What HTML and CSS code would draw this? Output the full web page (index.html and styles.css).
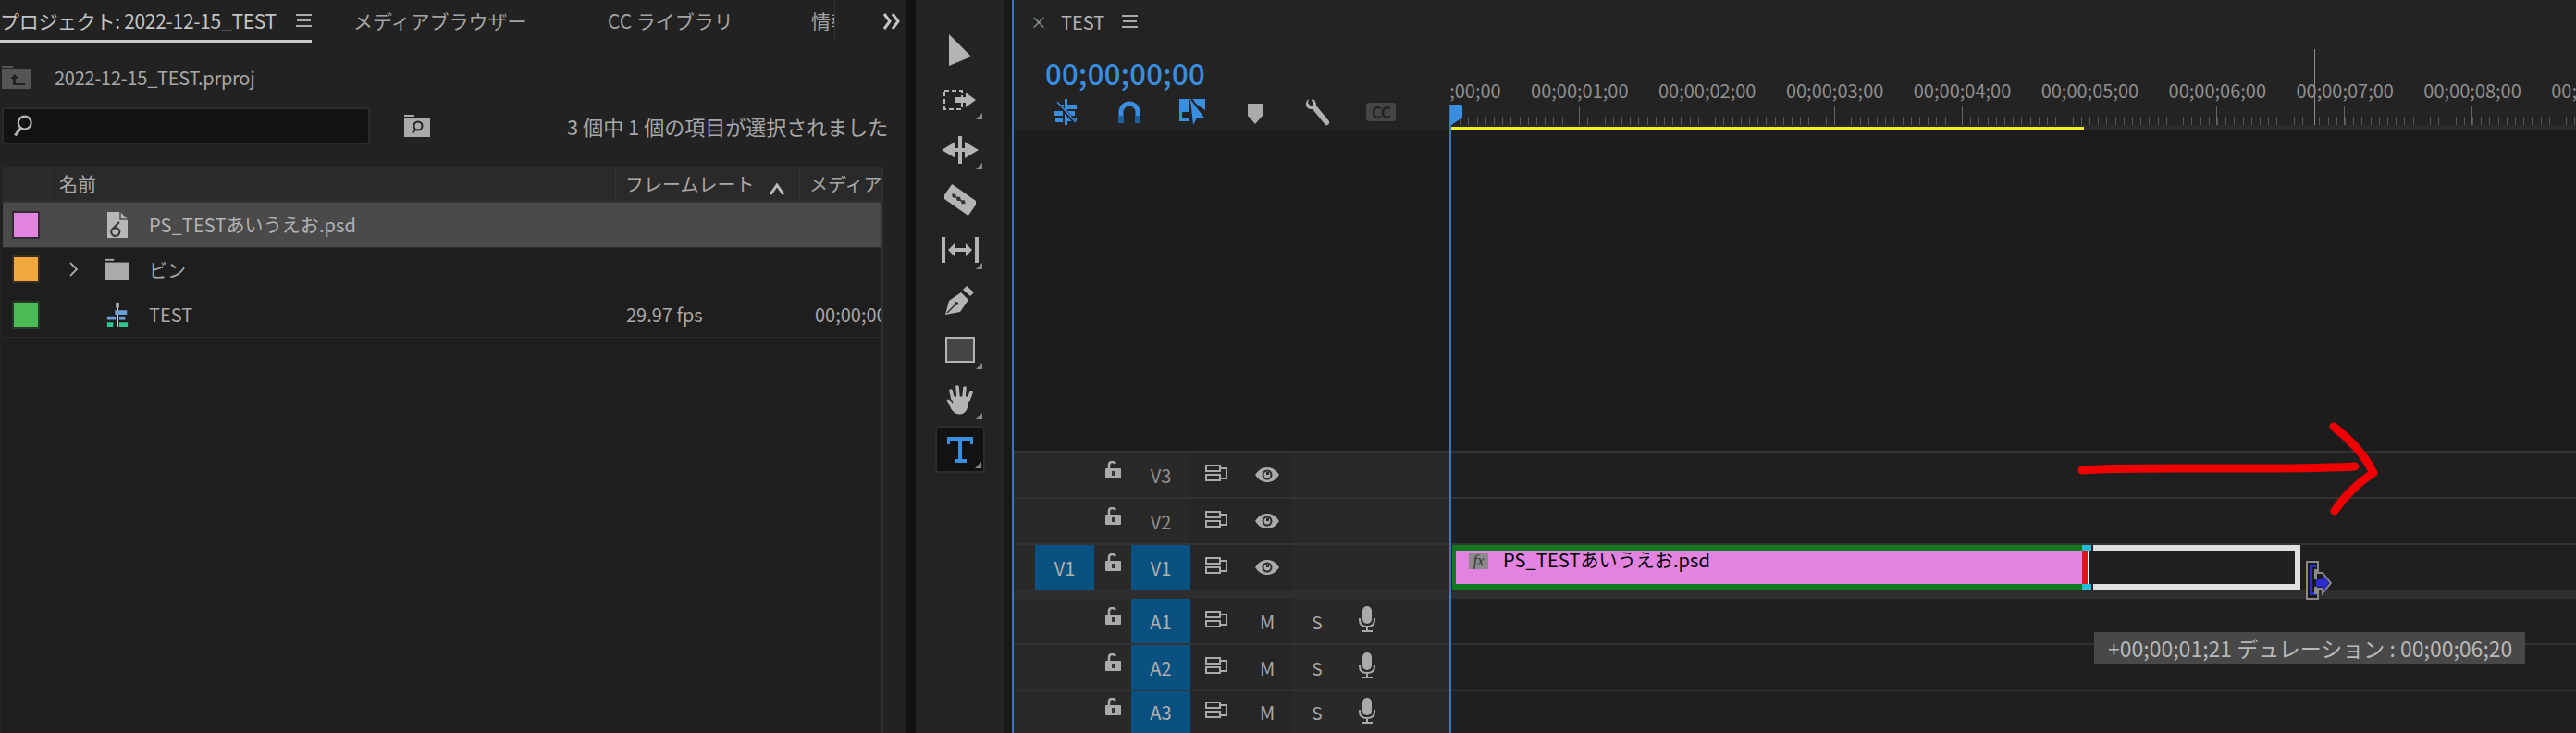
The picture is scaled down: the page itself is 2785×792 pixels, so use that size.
FILE: index.html
```html
<!DOCTYPE html>
<html lang="ja">
<head>
<meta charset="utf-8">
<title>TEST</title>
<link rel="stylesheet" href="styles.css">
</head>
<body>
<svg class="defs" xmlns="http://www.w3.org/2000/svg">
  <symbol id="menu" viewBox="0 0 17 14"><path d="M0 1h17M1 7h15M0 13h17" stroke="#aaa" stroke-width="2" fill="none"/></symbol>
  <symbol id="lock" viewBox="0 0 17 19"><path d="M4 9V4.500C4 2 5.500 1 7.500 1S10.500 1.800 11 3" stroke="#aaa" stroke-width="2.500" fill="none"/><rect x="0" y="8" width="17" height="11" rx="1" fill="#aaa"/><rect x="7" y="11" width="3" height="5" fill="#333"/></symbol>
  <symbol id="sync" viewBox="0 0 24 19"><path d="M1 2h15v6H1zM16 5h7v11h-7M1 12h15v6H1z" stroke="#aaa" stroke-width="2" fill="none"/></symbol>
  <symbol id="eye" viewBox="0 0 26 16"><path d="M0 8C4 2 8 0 13 0s9 2 13 8c-4 6-8 8-13 8S4 14 0 8z" fill="#aaa"/><circle cx="13" cy="8" r="5.500" fill="#2a2a2a"/><circle cx="13" cy="8" r="3.500" fill="#aaa"/><rect x="12" y="5" width="3" height="3" fill="#2a2a2a"/></symbol>
  <symbol id="mic" viewBox="0 0 18 28"><rect x="4" y="0" width="10" height="19" rx="5" fill="#aaa"/><path d="M1 13v2c0 5 3 7 8 7s8-2 8-7v-2M9 22v4M3 27h12" stroke="#aaa" stroke-width="2" fill="none"/></symbol>
  <symbol id="corner" viewBox="0 0 7 7"><path d="M7 0v7H0z" fill="#888"/></symbol>
</svg>

<div class="app">
  <section class="project">
    <nav class="tabs">
      <div class="tab active"><span>プロジェクト: 2022-12-15_TEST</span><svg class="menu-icon"><use href="#menu"/></svg></div>
      <div class="tab media">メディアブラウザー</div>
      <div class="tab cc">CC ライブラリ</div>
      <div class="tab info">情報</div>
      <svg class="more" viewBox="0 0 20 18"><path d="M2 1l6 8-6 8M11 1l6 8-6 8" stroke="#c4c4c4" stroke-width="3" fill="none"/></svg>
    </nav>
    <div class="pathrow">
      <svg class="up-icon" viewBox="0 0 33 25"><path d="M1 0h12v2H1z" fill="#555"/><rect x="1" y="4" width="32" height="21" fill="#555"/><path d="M15 9l-5 5h3v7h13v-2H16v-5h3z" fill="#222"/></svg>
      <span>2022-12-15_TEST.prproj</span>
    </div>
    <div class="searchrow">
      <div class="search">
        <svg class="search-icon" viewBox="0 0 24 30"><circle cx="14" cy="11" r="8" stroke="#bbb" stroke-width="2.500" fill="none"/><path d="M9 18l-7 9" stroke="#bbb" stroke-width="3.500"/></svg>
      </div>
      <svg class="bin-search" viewBox="0 0 28 24"><rect y="0" width="11" height="2" fill="#aaa"/><rect y="4" width="28" height="20" fill="#aaa"/><circle cx="15" cy="12" r="4.500" stroke="#222" stroke-width="2" fill="none"/><path d="M12 16l-3 4" stroke="#222" stroke-width="2"/></svg>
      <span class="status">3 個中 1 個の項目が選択されました</span>
    </div>
    <div class="table">
      <div class="thead">
        <div class="th swatch-col"></div>
        <div class="th name-col">名前</div>
        <div class="th rate-col">フレームレート<svg class="caret" viewBox="0 0 18 14"><path d="M2 13l7-10 7 10" stroke="#bbb" stroke-width="3" fill="none"/></svg></div>
        <div class="th media-col">メディア開始</div>
      </div>
      <div class="row selected">
        <span class="swatch pink"></span><span></span>
        <svg class="item-icon" viewBox="0 0 26 28"><path d="M2 0h14l8 8v20H2z" fill="#b8b8b8"/><path d="M16 0v8h8" stroke="#4a4a4a" stroke-width="1.500" fill="none"/><path d="M15 11l-8 8a4.500 4.500 0 1 0 8 1c-1-3-4-3-6-2" stroke="#3c3c3c" stroke-width="2.200" fill="none"/></svg>
        <span class="name">PS_TESTあいうえお.psd</span>
      </div>
      <div class="row">
        <span class="swatch orange"></span>
        <svg class="chevron" viewBox="0 0 10 16"><path d="M1 1l7 7-7 7" stroke="#aaa" stroke-width="1.800" fill="none"/></svg>
        <svg class="item-icon" viewBox="0 0 28 24"><rect y="0" width="10" height="2" fill="#aaa"/><rect y="4" width="28" height="20" fill="#aaa"/></svg>
        <span class="name">ビン</span>
      </div>
      <div class="row">
        <span class="swatch green"></span><span></span>
        <svg class="item-icon seq" viewBox="0 0 28 28"><rect x="13" y="0" width="2" height="28" fill="#ddd"/><rect x="12" y="0" width="4" height="6" fill="#aaa"/><path d="M11 9h14v5H11zM2 16h10v4H2z" fill="#6d9ed6"/><path d="M16 16h7v4h-7z" fill="#6d9ed6"/><path d="M2 23h7v5H2zM16 23h10v5H16z" fill="#2fc88f"/></svg>
        <span class="name">TEST</span>
        <span class="fps">29.97 fps</span>
        <span class="tc">00;00;00;00</span>
      </div>
    </div>
  </section>

  <div class="gutter-a"></div>

  <aside class="tools">
    <div class="tool"><svg width="24" height="34" viewBox="0 0 24 34"><path d="M0 0l24 24-24 10z" fill="#b4b4b4"/></svg></div>
    <div class="tool"><svg width="36" height="22" viewBox="0 0 36 22"><rect x="1" y="1" width="19" height="20" stroke="#b4b4b4" stroke-width="2" stroke-dasharray="5 3" fill="none"/><path d="M12 8h12V3l11 8-11 8v-5H12z" fill="#b4b4b4"/></svg><svg class="corner"><use href="#corner"/></svg></div>
    <div class="tool"><svg width="40" height="30" viewBox="0 0 40 30"><path d="M18 0h4v30h-4zM0 15l15-9v18zM40 15l-15-9v18z" fill="#b4b4b4"/><path d="M15 13h10v4H15z" fill="#b4b4b4"/></svg><svg class="corner"><use href="#corner"/></svg></div>
    <div class="tool"><svg width="34" height="34" viewBox="0 0 34 34"><g transform="rotate(35 17 17)"><rect x="0" y="8" width="34" height="18" rx="1" fill="#b4b4b4"/><path d="M6 17l3-2.500 3 2 3-2 3 2 3-2 3 2.500-3 2.500-3-2-3 2-3-2-3 2z" fill="#333"/></g></svg></div>
    <div class="tool"><svg width="40" height="28" viewBox="0 0 40 28"><path d="M0 0h4v28H0zM36 0h4v28h-4zM7 14l7-7v5h12V7l7 7-7 7v-5H14v5z" fill="#b4b4b4"/></svg><svg class="corner"><use href="#corner"/></svg></div>
    <div class="tool"><svg width="32" height="32" viewBox="0 0 32 32"><path d="M0 32l4-15 13-9 8 8-9 13z" fill="#b4b4b4"/><path d="M19 5l4-4 8 7-4 4z" fill="#b4b4b4"/><path d="M2 30l9-9" stroke="#2a2a2a" stroke-width="1.500"/><circle cx="12" cy="20" r="2" fill="#2a2a2a"/></svg></div>
    <div class="tool"><svg width="32" height="28" viewBox="0 0 32 28"><rect x="1" y="1" width="30" height="26" fill="#444" stroke="#b4b4b4" stroke-width="2"/></svg><svg class="corner"><use href="#corner"/></svg></div>
    <div class="tool"><svg width="32" height="32" viewBox="0 0 32 32"><path d="M8 15L6 6M14 13L13 2M20 13l1-10M25 16l3-8" stroke="#b4b4b4" stroke-width="3.600" stroke-linecap="round"/><path d="M2 16c3 0 5 3 7 5l-1-8h17l-1 9c-1 6-4 9-8 9-5 0-7-2-9-5z" fill="#b4b4b4" stroke="#b4b4b4" stroke-width="1" stroke-linejoin="round"/></svg><svg class="corner"><use href="#corner"/></svg></div>
    <div class="tool active-tool"><svg width="28" height="28" viewBox="0 0 28 28"><path d="M0 0h28v8h-3V4H16v20h5v4H8v-4h4V4H3v4H0z" fill="#3a8ee0"/></svg><svg class="corner"><use href="#corner"/></svg></div>
  </aside>

  <div class="gutter-b"></div>

  <section class="timeline">
    <header class="tl-tab">
      <span class="close">×</span><span class="seq-name">TEST</span><svg class="menu-icon"><use href="#menu"/></svg>
    </header>
    <div class="tl-top">
      <div class="tl-controls">
        <div class="timecode">00;00;00;00</div>
        <div class="tl-icons">
          <svg width="28" height="28" viewBox="0 0 28 28"><path d="M13 0h3v28h-3zM16 6h10v5H16zM1 13h10v5H1zM16 13h8v5h-8zM3 20h8v5H3zM16 20h10v4H16zM7 6h5v4H7z" fill="#3a8ee0"/><path d="M4 3l21 23" stroke="#232323" stroke-width="4"/><path d="M5 3l20 22" stroke="#3a8ee0" stroke-width="1.500"/></svg>
          <svg class="ic-magnet" width="24" height="24" viewBox="0 0 24 24"><path d="M3 16V12a9 9 0 0 1 18 0v4" stroke="#3a8ee0" stroke-width="5" fill="none"/><path d="M0 16h6v8H0zM18 16h6v8h-6z" fill="#1e5f9e"/></svg>
          <svg class="ic-link" width="28" height="28" viewBox="0 0 28 28"><path d="M0 0h10v14H3v6h7v4H0zM12 0l16 20-9 0-4 8z" fill="#3a8ee0"/><path d="M10 0h3l10 0v0l5 0v12z" fill="#3a8ee0"/><path d="M13 0l15 20" stroke="#232323" stroke-width="2"/></svg>
          <svg class="ic-marker" width="16" height="30" viewBox="0 0 16 30"><path d="M0 6h16v13l-8 9-8-9z" fill="#aaa"/></svg>
          <svg class="ic-wrench" width="28" height="30" viewBox="0 0 28 30"><path d="M4 1c-3 2-4 6-2 9 2 2 4 2 6 2l14 17c2 1 5-1 4-4L12 8c0-3-1-6-4-7L7 2l2 5-3 2-3-4z" fill="#b0b0b0"/></svg>
          <span class="cc-badge">CC</span>
        </div>
      </div>
      <div class="ruler">
        <div class="ruler-labels">
          <span>00;00;00;00</span><span>00;00;01;00</span><span>00;00;02;00</span><span>00;00;03;00</span><span>00;00;04;00</span><span>00;00;05;00</span><span>00;00;06;00</span><span>00;00;07;00</span><span>00;00;08;00</span><span>00;00;09;00</span>
        </div>
        <div class="ticks"></div>
        <div class="work-area"><div class="work-bar"></div></div>
      </div>
    </div>

    <div class="empty-area"><div class="empty-head"></div><div class="empty-lane"></div></div>

    <div class="track line">
      <div class="head"><span class="src"></span><span class="lockcell"><svg class="lock"><use href="#lock"/></svg></span><span class="target off">V3</span><span class="synccell"><svg class="sync"><use href="#sync"/></svg></span><span class="btncell"><svg class="eye"><use href="#eye"/></svg></span></div>
      <div class="lane"></div>
    </div>
    <div class="track line">
      <div class="head"><span class="src"></span><span class="lockcell"><svg class="lock"><use href="#lock"/></svg></span><span class="target off">V2</span><span class="synccell"><svg class="sync"><use href="#sync"/></svg></span><span class="btncell"><svg class="eye"><use href="#eye"/></svg></span></div>
      <div class="lane"></div>
    </div>
    <div class="track line">
      <div class="head"><span class="src on">V1</span><span class="lockcell"><svg class="lock"><use href="#lock"/></svg></span><span class="target">V1</span><span class="synccell"><svg class="sync"><use href="#sync"/></svg></span><span class="btncell"><svg class="eye"><use href="#eye"/></svg></span></div>
      <div class="lane">
        <div class="clip">
          <span class="fx">fx</span><span class="clip-name">PS_TESTあいうえお.psd</span>
        </div>
        <div class="clip-end"></div>
        <div class="ghost"></div>
      </div>
    </div>
    <div class="divider"></div>
    <div class="track audio">
      <div class="head"><span class="src"></span><span class="lockcell"><svg class="lock"><use href="#lock"/></svg></span><span class="target">A1</span><span class="synccell"><svg class="sync"><use href="#sync"/></svg></span><span class="btncell">M</span><span class="btncell s">S</span><span class="btncell mic-cell"><svg class="mic"><use href="#mic"/></svg></span></div>
      <div class="lane"></div>
    </div>
    <div class="track line audio">
      <div class="head"><span class="src"></span><span class="lockcell"><svg class="lock"><use href="#lock"/></svg></span><span class="target">A2</span><span class="synccell"><svg class="sync"><use href="#sync"/></svg></span><span class="btncell">M</span><span class="btncell s">S</span><span class="btncell mic-cell"><svg class="mic"><use href="#mic"/></svg></span></div>
      <div class="lane"></div>
    </div>
    <div class="track line audio last">
      <div class="head"><span class="src"></span><span class="lockcell"><svg class="lock"><use href="#lock"/></svg></span><span class="target">A3</span><span class="synccell"><svg class="sync"><use href="#sync"/></svg></span><span class="btncell">M</span><span class="btncell s">S</span><span class="btncell mic-cell"><svg class="mic"><use href="#mic"/></svg></span></div>
      <div class="lane"></div>
    </div>

    <!-- overlays, in timeline coordinates -->
    <div class="playhead-line"></div>
    <svg class="playhead" viewBox="0 0 13 22"><path d="M0 2a2 2 0 0 1 2-2h9a2 2 0 0 1 2 2v12l-12 8H0z" fill="#3a8ee0"/></svg>
    <div class="hairline"></div>
    <svg class="annot" viewBox="0 0 340 110"><path d="M5 53C70 48 200 54 300 49M277 6c18 14 34 32 43 50-16 10-30 24-42 41" stroke="#f00000" stroke-width="9" stroke-linecap="round" stroke-linejoin="round" fill="none"/></svg>
    <svg class="ripple-cursor" viewBox="0 0 28 42"><path d="M1 1h12v12h5l9 11-9 11v-5h-5v11H1z" fill="#1a1a1a" stroke="#8a8a8a" stroke-width="2"/><path d="M4 4h7v3H7v27h4v3H4z" fill="#2b2bd0"/><path d="M11 20h8v-5l6 9-6 9v-5h-8z" fill="#2b2bd0"/><path d="M9 9h3v11H9zM9 28h3v8H9z" fill="#8a8a8a"/></svg>
    <div class="tooltip">+00;00;01;21 デュレーション : 00;00;06;20</div>
  </section>
</div>
</body>
</html>
```
FILE: styles.css
```css
* { box-sizing: border-box; }
html, body { margin: 0; height: 792px; overflow: hidden; background: #161616; }
body { font-family: "Noto Sans CJK JP", "Noto Sans", sans-serif; font-size: 20px; color: #a8a8a8; }
.defs { display: none; }
.app { display: flex; height: 792px; width: 2785px; overflow: hidden; }

/* project panel */
.project { width: 980px; flex: none; background: #222222; display: flex; flex-direction: column; overflow: hidden; }
.gutter-a { width: 10px; flex: none; background: #121212; }
.gutter-b { width: 9px; flex: none; background: #191919; }
.tabs { display: flex; height: 47px; align-items: stretch; flex: none; }
.tab { line-height: 44px; white-space: nowrap; font-size: 21px; color: #a4a4a4; }
.tab.active { width: 337px; color: #c4c4c4; border-bottom: 4px solid #c8c8c8; display: flex; justify-content: space-between; align-items: center; letter-spacing: -0.3px; }
.menu-icon { width: 17px; height: 14px; }
.tab.media { margin-left: 45px; width: 275px; }
.tab.cc { width: 220px; }
.tab.info { width: 26px; height: 43px; overflow: hidden; border-right: 1px solid #333; }
.more { width: 20px; height: 18px; margin: 14px 0 0 51px; }
.pathrow { height: 69px; display: flex; align-items: center; flex: none; padding: 4px 0 0 1px; gap: 25px; color: #a8a8a8; letter-spacing: -0.25px; }
.up-icon { width: 33px; height: 25px; }
.searchrow { height: 40px; display: flex; align-items: center; flex: none; padding-left: 2px; }
.search { width: 398px; height: 40px; background: #121212; border: 2px solid #2b2b2b; border-radius: 4px; display: flex; align-items: center; padding-left: 9px; }
.search-icon { width: 24px; height: 26px; }
.bin-search { width: 28px; height: 24px; margin-left: 37px; }
.status { margin-left: 148px; white-space: nowrap; font-size: 22px; }
.table { margin: 24px 0 0 2px; width: 953px; flex: 1; border-right: 2px solid #303030; overflow: hidden; background: #1e1e1e; }
.thead { display: grid; grid-template-columns: 52px 612px 199px 1fr; height: 39px; background: #2a2a2a; border-bottom: 2px solid #333; }
.th { border-right: 1px solid #333; line-height: 36px; padding-left: 10px; white-space: nowrap; overflow: hidden; display: flex; align-items: center; }
.th.rate-col { gap: 16px; }
.caret { width: 18px; height: 14px; margin-top: 10px; flex: none; }
.row { display: grid; grid-template-columns: 52px 59px 47px 516px 204px 1fr; align-items: center; height: 48.5px; margin-left: 1px; border-bottom: 1px solid #2b2b2b; white-space: nowrap; overflow: hidden; }
.row.selected { background: #4a4a4a; }
.swatch { width: 30px; height: 30px; margin-left: 10px; border: 2px solid #332a33; }
.pink { background: #e283e0; }
.orange { background: #f0a93e; border-color: #3a2f1e; }
.green { background: #4cbb55; border-color: #243a26; }
.chevron { width: 10px; height: 16px; margin-left: 20px; }
.item-icon { width: 26px; height: 28px; }
.name { color: #a8a8a8; }
.selected .name { color: #b4b4b4; letter-spacing: 0.1px; }
.tc { overflow: hidden; }

/* tools */
.tools { width: 95px; flex: none; background: #232323; padding-top: 27px; display: flex; flex-direction: column; align-items: center; gap: 0; }
.tool { width: 54px; height: 54px; display: flex; align-items: center; justify-content: center; position: relative; flex: none; }
.corner { position: absolute; right: 3px; bottom: 6px; width: 7px; height: 7px; }
.active-tool { height: 51px; margin-top: 1px; background: #121212; border: 2px solid #2c2c2c; border-radius: 4px; }
.active-tool .corner { bottom: 3px; right: 2px; }

/* timeline */
.timeline { flex: 1; min-width: 0; position: relative; display: flex; flex-direction: column; background: #232323; border-left: 2px solid #3a78bd; }
.tl-tab { height: 46px; display: flex; align-items: center; flex: none; padding-left: 18px; }
.close { width: 33px; font-size: 18px; color: #999; }
.seq-name { width: 66px; color: #b4b4b4; }
.tl-top { display: flex; height: 95px; flex: none; }
.tl-controls { width: 472px; flex: none; padding-left: 34px; }
.timecode { color: #3a8ee0; font-size: 31px; font-weight: 500; line-height: 36px; margin-top: 15px; letter-spacing: 0.35px; }
.tl-icons { display: flex; align-items: center; height: 30px; margin-top: 9px; padding-left: 8px; }
.ic-magnet { margin-left: 43px; }
.ic-link { margin-left: 42px; }
.ic-marker { margin-left: 46px; }
.ic-wrench { margin-left: 46px; }
.cc-badge { margin-left: 38px; width: 32px; height: 20px; background: #454545; color: #222; border-radius: 3px; font-size: 17px; font-weight: 700; line-height: 20px; text-align: center; letter-spacing: -0.5px; }
.ruler { flex: 1; min-width: 0; overflow: hidden; display: flex; flex-direction: column; }
.ruler-labels { display: flex; height: 23px; margin-left: -67px; flex: none; margin-top: 30px; }
.ruler-labels span { width: 137.9px; flex: none; text-align: center; line-height: 44px; white-space: nowrap; color: #8f8f8f; }
.ticks { height: 21px; margin-top: 15px; flex: none;
  background-image:
    repeating-linear-gradient(90deg, #666 0 1px, transparent 1px 137.9px),
    repeating-linear-gradient(90deg, #555 0 1px, transparent 1px 9.2px);
  background-size: 100% 21px, 100% 9px;
  background-position: 0 0, 0 12px;
  background-repeat: no-repeat;
  margin-left: 1px;
}
.work-area { height: 6px; background: #2a2a2a; flex: none; }
.work-bar { width: 685px; height: 4px; margin-top: 2px; background: #f0f020; }

.empty-area { flex: 1; display: flex; min-height: 0; }
.empty-head { width: 472px; background: #1c1c1c; }
.empty-lane { flex: 1; background: #1c1c1c; }

.track { display: flex; height: 50px; flex: none; }
.track.audio { height: 48px; }
.track.line.audio { height: 50px; }
.track.line.audio.last { height: 47px; }
.line { border-top: 2px solid #333; }
.head { width: 472px; flex: none; background: #292929; display: flex; align-items: stretch; padding-left: 23px; overflow: hidden; }
.lane { flex: 1; min-width: 0; background: #1f1f1f; display: flex; align-items: stretch; }
.divider { height: 10px; background: #2e2e2e; flex: none; }
.src { width: 64px; flex: none; display: flex; align-items: center; justify-content: center; }
.src.on { background: #0a5080; color: #b0b0b0; }
.lockcell { width: 40px; flex: none; display: flex; align-items: center; justify-content: center; padding-bottom: 12px; }
.lock { width: 17px; height: 19px; }
.target { width: 64px; flex: none; background: #0a5080; color: #b0b0b0; display: flex; align-items: center; justify-content: center; }
.target.off { background: none; color: #8f8f8f; }
.synccell { width: 56px; flex: none; display: flex; align-items: center; justify-content: center; padding-bottom: 6px; background: #262626; }
.sync { width: 24px; height: 19px; }
.btncell { width: 54px; flex: none; display: flex; align-items: center; justify-content: center; background: #262626; color: #a8a8a8; }
.btncell.s { font-size: 19px; background: none; }
.mic-cell { background: none; padding-bottom: 4px; }
.eye { width: 26px; height: 16px; }
.mic { width: 18px; height: 28px; }

.clip { width: 681px; flex: none; margin-left: 2px; background: #e283e0; border: solid #0d7a1e; border-width: 6px 0 6px 4px; display: flex; align-items: flex-start; padding: 0 0 0 14px; color: #000; overflow: hidden; }
.fx { width: 21px; height: 18px; margin-top: 2px; background: #8a8a8a; color: #333; font-family: "Liberation Serif", serif; font-style: italic; font-size: 16px; line-height: 18px; text-align: center; flex: none; }
.clip-name { margin-left: 16px; line-height: 20px; white-space: nowrap; color: #000; letter-spacing: 0.1px; }
.clip-end { width: 10px; flex: none; background: linear-gradient(90deg, #e01414 0 6px, #fff 6px 8px, #1f1f1f 8px); border-top: 6px solid #20bcd8; border-bottom: 6px solid #20bcd8; }
.ghost { width: 224px; margin-left: 2px; flex: none; border: 6px solid #e0e0e0; border-left-width: 0; background: #202020; }

.playhead-line { position: absolute; left: 471px; top: 113px; bottom: 0; width: 2px; background: #3a78bd; }
.playhead { position: absolute; left: 472px; top: 113px; width: 13px; height: 22px; }
.hairline { position: absolute; left: 1406px; top: 53px; width: 1px; height: 82px; background: #8a8a8a; }
.annot { position: absolute; left: 1150px; top: 455px; width: 340px; height: 110px; }
.ripple-cursor { position: absolute; left: 1397px; top: 606px; width: 28px; height: 42px; }
.tooltip { position: absolute; left: 1168px; top: 683px; width: 466px; height: 34px; background: #484848; color: #b8b8b8; font-size: 23px; line-height: 34px; padding-left: 15px; white-space: nowrap; }
```
